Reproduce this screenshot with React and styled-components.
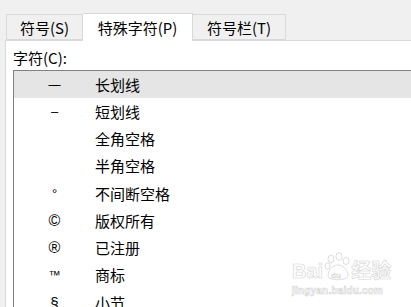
import React from "react";
import styled, { createGlobalStyle } from "styled-components";

const Global = createGlobalStyle`
  html, body { margin: 0; padding: 0; }
  body {
    background: #f0f0f0;
    font-family: "Noto Sans CJK SC", "Noto Sans", sans-serif;
    color: #000;
    overflow: hidden;
  }
`;

const Page = styled.div`
  width: 411px;
  height: 307px;
  padding-top: 12px;
  box-sizing: border-box;
  position: relative;
  overflow: hidden;
`;

const TabStrip = styled.div`
  display: flex;
  align-items: flex-end;
  padding-left: 6px;
  height: 28px;
  position: relative;
  z-index: 1;
`;

const Tab = styled.div`
  box-sizing: border-box;
  height: ${(p) => (p.$active ? 28 : 26)}px;
  margin-bottom: ${(p) => (p.$active ? -1 : 0)}px;
  width: ${(p) => p.$w}px;
  background: ${(p) => (p.$active ? "#ffffff" : "#f0f0f0")};
  border: 1px solid #d9d9d9;
  border-bottom: ${(p) => (p.$active ? "none" : "1px solid #d9d9d9")};
  border-left: ${(p) => (p.$noLeft ? "none" : "1px solid #d9d9d9")};
  display: flex;
  align-items: center;
  justify-content: center;
  font-size: 15px;
  line-height: 20px;
  padding-top: ${(p) => (p.$active ? 1 : 2)}px;
`;

const Panel = styled.div`
  margin-left: 5px;
  background: #ffffff;
  border-top: 1px solid #d9d9d9;
  border-left: 1px solid #d9d9d9;
  height: 300px;
  padding: 7px 0 0 7px;
  box-sizing: border-box;
`;

const Label = styled.div`
  font-size: 15px;
  line-height: 20px;
  height: 22px;
`;

const ListBox = styled.div`
  border-top: 1px solid #828282;
  border-left: 1px solid #828282;
  background: #ffffff;
  display: flex;
  flex-direction: column;
`;

const Row = styled.div`
  display: grid;
  grid-template-columns: 81px 1fr;
  align-items: center;
  height: 27.25px;
  background: ${(p) => (p.$selected ? "#e5e5e5" : "transparent")};
  font-size: 15px;
  line-height: 20px;
`;

const Sym = styled.span`
  text-align: center;
  font-family: "Liberation Sans", "Noto Sans", sans-serif;
  font-size: ${(p) => p.$size || 15}px;
`;

const Name = styled.span`
  padding-left: 0;
`;

const Watermark = styled.div`
  position: absolute;
  left: 292px;
  top: 252px;
  display: flex;
  flex-direction: column;
  align-items: flex-start;
  pointer-events: none;
  color: #ffffff;
  -webkit-text-stroke: 0.6px #d4d4d4;
  font-family: "Liberation Sans", "Noto Sans CJK SC", sans-serif;
`;

const WmTop = styled.div`
  display: flex;
  align-items: flex-end;
  font-size: 20px;
  font-weight: bold;
  line-height: 22px;
  gap: 1px;
`;

const WmSub = styled.div`
  font-size: 10px;
  line-height: 12px;
  margin-top: 3px;
  font-weight: bold;
  letter-spacing: 0.2px;
`;

const rows = [
  ["—", "长划线", 12],
  ["–", "短划线", 13],
  ["", "全角空格"],
  ["", "半角空格"],
  ["°", "不间断空格", 13],
  ["©", "版权所有", 16],
  ["®", "已注册", 16],
  ["™", "商标", 12],
  ["§", "小节", 15],
];

function Paw() {
  return (
    <svg width="26" height="30" viewBox="0 0 26 30">
      <g fill="#fff" stroke="#d4d4d4" strokeWidth="0.8">
        <ellipse cx="7" cy="7" rx="3" ry="4" />
        <ellipse cx="15" cy="4.5" rx="3" ry="4" />
        <ellipse cx="22" cy="9" rx="3" ry="3.5" />
        <ellipse cx="3.5" cy="14" rx="2.5" ry="3" />
        <path d="M4 24 C4 16 11 13 14 13 C18 13 24 17 24 24 C24 29 4 29 4 24 Z" />
      </g>
      <text x="7" y="26" fontSize="8" fontFamily="Liberation Sans" fill="#fff" stroke="#d4d4d4" strokeWidth="0.5">du</text>
    </svg>
  );
}

export default function App() {
  return (
    <Page>
      <Global />
      <TabStrip>
        <Tab $w={77}>符号(S)</Tab>
        <Tab $w={110} $active $noLeft>特殊字符(P)</Tab>
        <Tab $w={93} $noLeft>符号栏(T)</Tab>
      </TabStrip>
      <Panel>
        <Label>字符(C):</Label>
        <ListBox>
          {rows.map(([s, n, size], i) => (
            <Row key={n} $selected={i === 0}>
              <Sym $size={size}>{s || "\u00a0"}</Sym>
              <Name>{n}</Name>
            </Row>
          ))}
        </ListBox>
      </Panel>
      <Watermark>
        <WmTop>
          <span>Bai</span>
          <Paw />
          <span>经验</span>
        </WmTop>
        <WmSub>jingyan.baidu.com</WmSub>
      </Watermark>
    </Page>
  );
}
